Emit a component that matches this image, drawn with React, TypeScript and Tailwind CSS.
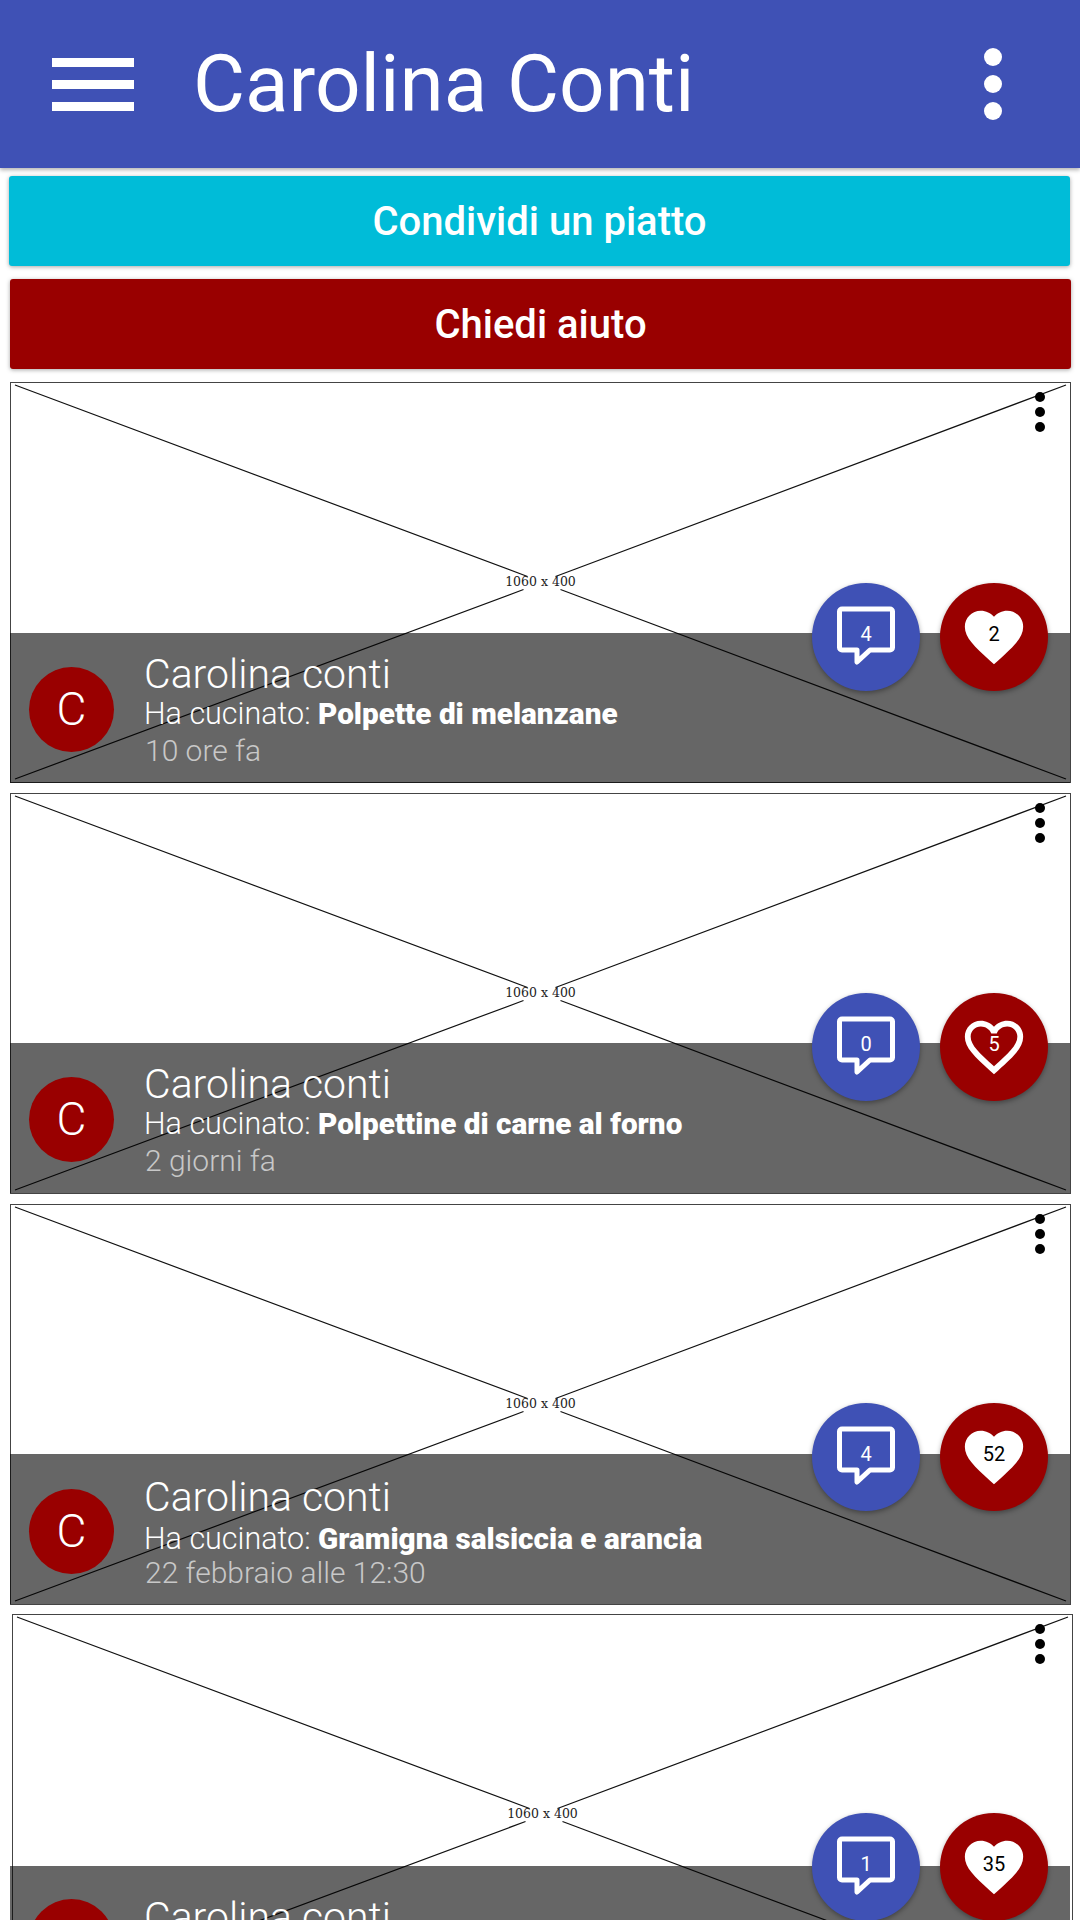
type Post = {
  dish: string
  time: string
  comments: number
  likes: number
  liked: boolean
  // the mockup cards are not evenly spaced, so each one carries its own nudges
  imgClass: string
  dotsClass: string
  barClass: string
  avatarClass: string
  textClass: string
  dishClass: string
  timeClass: string
}

const posts: Post[] = [
  {
    dish: 'Polpette di melanzane', time: '10 ore fa', comments: 4, likes: 2, liked: true,
    imgClass: 'mt-0 ml-0', dotsClass: 'top-[10px]', barClass: 'top-[251px]', avatarClass: 'mt-[34px]',
    textClass: 'pt-[19px]', dishClass: 'mt-0', timeClass: 'mt-px',
  },
  {
    dish: 'Polpettine di carne al forno', time: '2 giorni fa', comments: 0, likes: 5, liked: false,
    imgClass: 'mt-px ml-0', dotsClass: 'top-[11px]', barClass: 'top-[251px]', avatarClass: 'mt-[34px]',
    textClass: 'pt-[19px]', dishClass: 'mt-0', timeClass: 'mt-px',
  },
  {
    dish: 'Gramigna salsiccia e arancia', time: '22 febbraio alle 12:30', comments: 4, likes: 52, liked: true,
    imgClass: 'mt-[2px] ml-0', dotsClass: 'top-[12px]', barClass: 'top-[252px]', avatarClass: 'mt-[35px]',
    textClass: 'pt-[21px]', dishClass: 'mt-[2px]', timeClass: '-mt-[2px]',
  },
  {
    dish: 'Polpette di zucchine', time: '3 giorni fa', comments: 1, likes: 35, liked: true,
    imgClass: 'mt-[2px] ml-[2px]', dotsClass: 'top-[12px]', barClass: 'top-[254px]', avatarClass: 'mt-[33px]',
    textClass: 'pt-[29px]', dishClass: 'mt-px', timeClass: 'mt-px',
  },
]

function Placeholder({ className }: { className: string }) {
  return (
    <div className={`relative h-[401px] w-[1061px] border border-[#444] bg-white ${className}`}>
      <svg className="absolute inset-0 h-full w-full" viewBox="0 0 1060 400" preserveAspectRatio="none" fill="none">
        <path d="M4 2 L517 194 M550 207 L1056 397 M4 397 L513 207 M545 194 L1056 2" stroke="#111" strokeWidth="1.2" />
      </svg>
      <div className="absolute inset-0 flex items-center justify-center pb-px font-['DejaVu_Serif'] text-[12.5px] text-[#222]">1060 x 400</div>
    </div>
  )
}

function CommentIcon() {
  return (
    <svg className="ml-[2px]" width="60" height="62" viewBox="0 0 60 62" fill="none">
      <path
        d="M5 3h48a2.500 2.500 0 0 1 2.500 2.500v36a2.500 2.500 0 0 1-2.500 2.500H33L20 56V44H5a2.500 2.500 0 0 1-2.500-2.500v-36A2.500 2.500 0 0 1 5 3z"
        stroke="white"
        strokeWidth="5"
        strokeLinejoin="round"
      />
    </svg>
  )
}

function HeartIcon({ filled }: { filled: boolean }) {
  return (
    <svg width="70" height="70" viewBox="0 0 24 24" fill="white">
      {filled ? (
        <path d="M12 21.35l-1.45-1.32C5.400 15.360 2 12.280 2 8.500 2 5.420 4.420 3 7.500 3c1.740 0 3.410.810 4.500 2.090C13.090 3.810 14.760 3 16.500 3 19.580 3 22 5.420 22 8.500c0 3.780-3.400 6.860-8.550 11.540L12 21.350z" />
      ) : (
        <path d="M16.500 3c-1.740 0-3.410.810-4.500 2.090C10.910 3.810 9.240 3 7.500 3 4.420 3 2 5.420 2 8.500c0 3.780 3.400 6.860 8.550 11.540L12 21.350l1.450-1.320C18.600 15.360 22 12.280 22 8.500 22 5.420 19.580 3 16.500 3zm-4.400 15.550l-.1.100-.1-.100C7.140 14.240 4 11.390 4 8.500 4 6.500 5.500 5 7.500 5c1.540 0 3.040.990 3.570 2.360h1.870C13.460 5.990 14.960 5 16.500 5c2 0 3.500 1.500 3.500 3.500 0 2.890-3.140 5.740-7.900 10.050z" />
      )}
    </svg>
  )
}

function PostCard({ post }: { post: Post }) {
  return (
    <div className="relative ml-[10px] h-[410px] w-[1061px] shrink-0">
      <Placeholder className={post.imgClass} />

      {/* three dots */}
      <div className={`absolute right-[26px] flex flex-col gap-[5px] ${post.dotsClass}`}>
        <div className="h-[10px] w-[10px] rounded-full bg-black" />
        <div className="h-[10px] w-[10px] rounded-full bg-black" />
        <div className="h-[10px] w-[10px] rounded-full bg-black" />
      </div>

      {/* bottom bar */}
      <div className={`absolute left-0 flex h-[150px] w-[1060px] items-start bg-black/60 pl-[19px] ${post.barClass}`}>
        <div className={`flex h-[85px] w-[85px] shrink-0 items-center justify-center rounded-full bg-[#990000] text-[46px] font-light text-white ${post.avatarClass}`}>C</div>
        <div className={`ml-[30px] flex flex-col text-white ${post.textClass}`}>
          <div className="text-[41px] font-light leading-[44px]">Carolina conti</div>
          <div className={`text-[30.500px] font-light leading-[36px] ${post.dishClass}`}>
            Ha cucinato: <span className="text-[29.700px] font-black">{post.dish}</span>
          </div>
          <div className={`ml-px text-[30px] font-light leading-[36px] text-[#c8c8c8] ${post.timeClass}`}>{post.time}</div>
        </div>
      </div>

      {/* action buttons */}
      <div className="absolute left-[802px] top-[201px] flex gap-[20px]">
        <div className="relative flex h-[108px] w-[108px] items-center justify-center rounded-full bg-[#3f51b5] shadow-[0_2px_5px_rgba(0,0,0,0.35)]">
          <CommentIcon />
          <span className="absolute left-0 right-0 top-[39px] text-center text-[20px] leading-[24px] text-white">{post.comments}</span>
        </div>
        <div className="relative flex h-[108px] w-[108px] items-center justify-center rounded-full bg-[#990000] shadow-[0_2px_5px_rgba(0,0,0,0.35)]">
          <HeartIcon filled={post.liked} />
          <span className={`absolute left-0 right-0 top-[39px] text-center text-[20px] leading-[24px] ${post.liked ? 'text-black' : 'text-white'}`}>{post.likes}</span>
        </div>
      </div>
    </div>
  )
}

export default function App() {
  return (
    <div className="flex h-[1920px] w-[1080px] flex-col overflow-hidden bg-white font-['Roboto',sans-serif]">
      <header className="relative z-10 flex h-[168px] shrink-0 items-center bg-[#3f51b5] shadow-[0_2px_4px_rgba(0,0,0,0.3)]">
        <div className="ml-[52px] flex w-[82px] flex-col gap-[13px]">
          <div className="h-[9px] bg-white" />
          <div className="h-[9px] bg-white" />
          <div className="h-[9px] bg-white" />
        </div>
        <h1 className="ml-[59px] text-[80px] font-normal leading-none text-white">Carolina Conti</h1>
        <div className="ml-auto mr-[78px] flex flex-col gap-[9px]">
          <div className="h-[18px] w-[18px] rounded-full bg-white" />
          <div className="h-[18px] w-[18px] rounded-full bg-white" />
          <div className="h-[18px] w-[18px] rounded-full bg-white" />
        </div>
      </header>

      <button className="ml-[9px] mt-[8px] h-[90px] w-[1061px] shrink-0 rounded-[3px] bg-[#00bcd8] pt-[2px] text-[40px] font-medium text-white shadow-[0_1px_4px_rgba(0,0,0,0.35)]">
        Condividi un piatto
      </button>
      <button className="ml-[10px] mt-[13px] h-[90px] w-[1061px] shrink-0 rounded-[3px] bg-[#990000] pt-[2px] text-[40px] font-medium text-white shadow-[0_1px_4px_rgba(0,0,0,0.35)]">
        Chiedi aiuto
      </button>

      <div className="mt-[13px] flex flex-col">
        {posts.map((post, i) => (
          <PostCard key={i} post={post} />
        ))}
      </div>
    </div>
  )
}
